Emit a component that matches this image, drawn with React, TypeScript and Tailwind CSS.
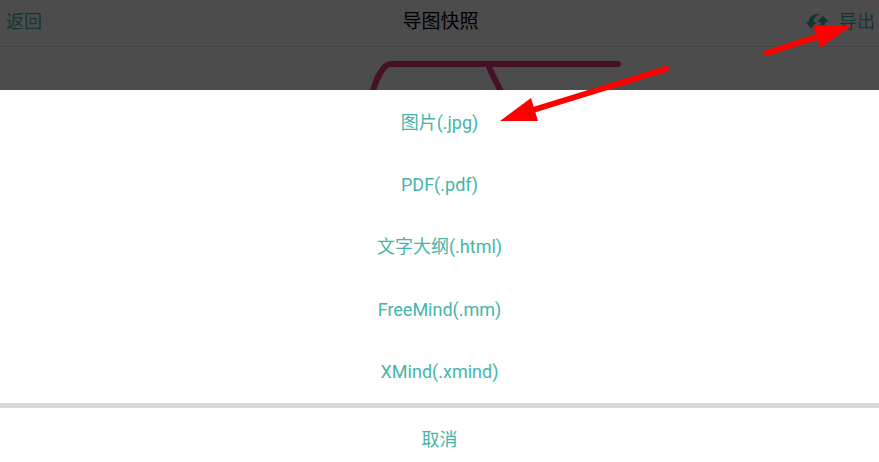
import React from 'react';

const EXPORT_FORMATS = [
  { id: 'jpg', label: '图片(.jpg)' },
  { id: 'pdf', label: 'PDF(.pdf)' },
  { id: 'html', label: '文字大纲(.html)' },
  { id: 'mm', label: 'FreeMind(.mm)' },
  { id: 'xmind', label: 'XMind(.xmind)' },
];

const SyncIcon: React.FC = () => (
  <svg width="24" height="18" viewBox="0 0 24 18" fill="currentColor" aria-hidden="true">
    <path d="M15.500 1.200C8.500 .2 3.800 3.500 3.600 9H.5l5.500 6.500L11.500 9H8.400c.1-4 2.400-6.200 7.100-7.800Z" />
    <path d="M8.500 16.800c7 1 11.700-2.300 11.900-7.800h3.100L18 2.500 12.500 9h3.100c-.1 4-2.400 6.200-7.100 7.800Z" />
  </svg>
);

const Header: React.FC = () => (
  <header className="grid h-[47px] grid-cols-[1fr_auto_1fr] items-center border-b border-[#e0e0e0] pr-1 pb-0.5 pl-1.5 text-lg">
    <button type="button" className="justify-self-start text-[#45b5aa]">返回</button>
    <h1 className="text-[19px] text-black">导图快照</h1>
    <div className="flex items-center gap-2.5 justify-self-end text-[#45b5aa]">
      <button type="button" aria-label="刷新">
        <SyncIcon />
      </button>
      <button type="button">导出</button>
    </div>
  </header>
);

const MindMap: React.FC = () => (
  <div className="flex h-[43px] justify-center overflow-hidden">
    <svg width="260" height="43" fill="none" stroke="#ec3780" strokeWidth="6" strokeLinecap="round" aria-hidden="true" className="ml-[114px]">
      <path d="M5 47C9 32 16 17 24 17H251" />
      <path d="M121 17C124 26 129 35 136 48" />
    </svg>
  </div>
);

const ExportSheet: React.FC = () => (
  <section aria-label="导出" className="flex flex-1 flex-col bg-white text-lg text-[#45b5aa]">
    <ul className="grid h-[313px] grid-rows-5 pt-0.5">
      {EXPORT_FORMATS.map((format) => (
        <li key={format.id} className="flex">
          <button type="button" className="flex-1">{format.label}</button>
        </li>
      ))}
    </ul>
    <button type="button" className="flex-1 border-t-[5px] border-[#d8d8d8] pt-[18px] pb-2">
      取消
    </button>
  </section>
);

/* Hand-drawn pointers laid over the page */
const Arrows: React.FC = () => (
  <svg width="380" height="130" fill="#f00" stroke="#f00" aria-hidden="true" className="pointer-events-none absolute top-0 right-0">
    <path d="M268 53L320 36M167 69L34 110" strokeWidth="6" strokeLinecap="round" />
    <path d="M352 26L314 25L321 48ZM1 121L32 98L39 121Z" stroke="none" />
  </svg>
);

export default function App() {
  return (
    <main className="relative flex min-h-screen flex-col overflow-hidden bg-white font-['Roboto','Noto_Sans_CJK_SC',sans-serif]">
      <div className="relative">
        <Header />
        <MindMap />
        <div className="absolute inset-0 bg-black/70" />
      </div>
      <ExportSheet />
      <Arrows />
    </main>
  );
}
